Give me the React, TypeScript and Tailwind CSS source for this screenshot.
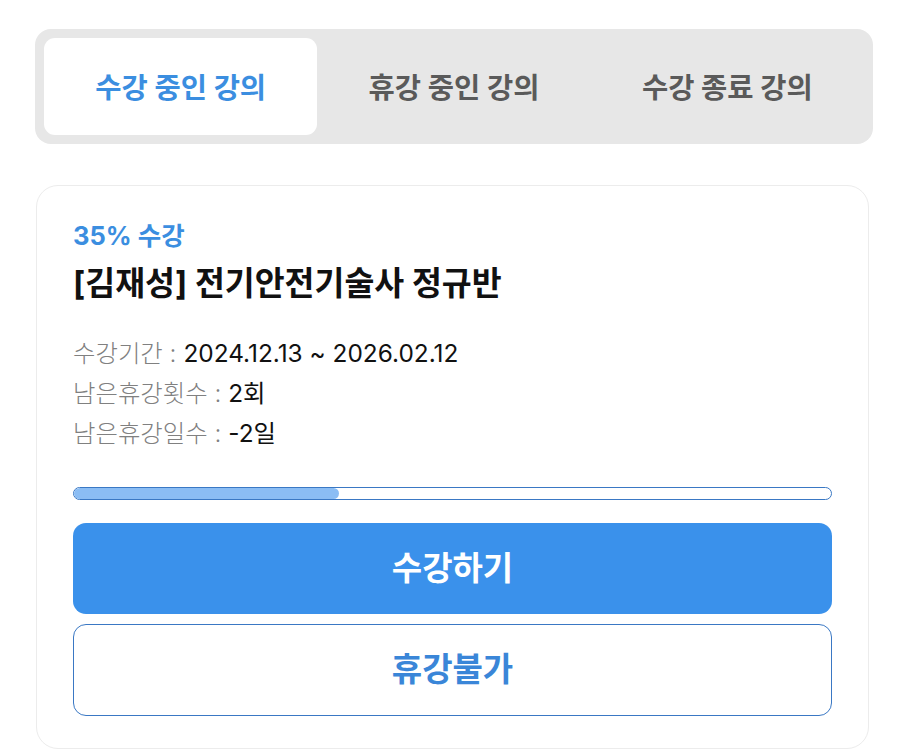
import React from "react";

const font = { fontFamily: "Inter, 'Noto Sans CJK KR', sans-serif" };

export default function App() {
  return (
    <div className="bg-white w-[905px] h-[750px] overflow-hidden" style={font}>
      <div className="pl-[35px] pt-[29px]">
        <div className="w-[838px] h-[115px] bg-[#e7e7e7] rounded-[16px] p-[9px] grid grid-cols-3">
          <div className="bg-white rounded-[11px] flex items-center justify-center pt-[4px] text-[28.5px] font-bold text-[#3b8ee0]">
            수강 중인 강의
          </div>
          <div className="flex items-center justify-center pt-[4px] text-[28.5px] font-bold text-[#5a5a5a]">
            휴강 중인 강의
          </div>
          <div className="flex items-center justify-center pt-[4px] text-[28.5px] font-bold text-[#5a5a5a]">
            수강 종료 강의
          </div>
        </div>
        <div className="mt-[41px] ml-px w-[833px] border border-[#ececec] rounded-[22px] px-[36px] pt-[34px] pb-[32px]">
          <div className="text-[25.5px] leading-[32px] font-bold text-[#3b8ee0]">35% 수강</div>
          <div className="mt-[12px] text-[32.5px] leading-[40px] font-bold text-[#111]">
            [김재성] 전기안전기술사 정규반
          </div>
          <div className="mt-[29px] flex flex-col text-[24.4px] leading-[40px]">
            <div>
              <span className="text-[#808080] font-light">수강기간 : </span>
              <span className="text-[#111]">2024.12.13 ~ 2026.02.12</span>
            </div>
            <div>
              <span className="text-[#808080] font-light">남은휴강횟수 : </span>
              <span className="text-[#111]">2회</span>
            </div>
            <div>
              <span className="text-[#808080] font-light">남은휴강일수 : </span>
              <span className="text-[#111]">-2일</span>
            </div>
          </div>
          <div className="mt-[34px] h-[13px] rounded-full border border-[#3a78c4] bg-white overflow-hidden">
            <div className="h-full bg-[#8bbdf4] rounded-full" style={{ width: "35%" }} />
          </div>
          <button className="mt-[23px] w-full h-[91px] rounded-[13px] bg-[#3a91eb] text-white text-[33px] font-bold flex items-center justify-center">
            수강하기
          </button>
          <button className="mt-[10px] w-full h-[92px] rounded-[13px] border-[1.5px] border-[#3a78c4] bg-white text-[#3a86d8] text-[33px] font-bold flex items-center justify-center">
            휴강불가
          </button>
        </div>
      </div>
    </div>
  );
}
